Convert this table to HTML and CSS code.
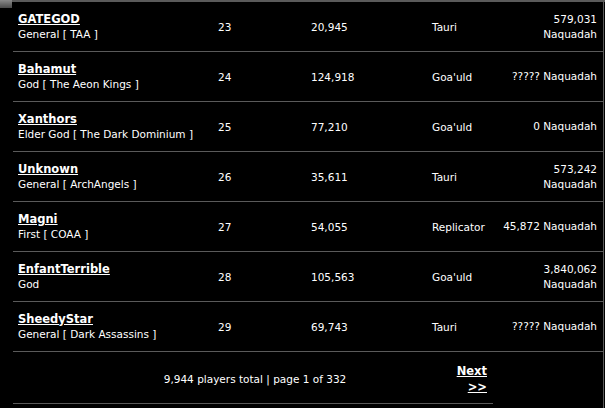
FILE: index.html
```html
<!DOCTYPE html>
<html>
<head>
<meta charset="utf-8">
<link rel="stylesheet" href="styles.css">
</head>
<body>
<div class="topbar"><span class="corner"></span></div>
<div class="board">
  <div class="row">
    <div class="c-name"><a href="#">GATEGOD</a><span>General [ TAA ]</span></div>
    <div class="c-rank">23</div>
    <div class="c-score">20,945</div>
    <div class="c-race">Tauri</div>
    <div class="c-naq">579,031<br>Naquadah</div>
  </div>
  <div class="row">
    <div class="c-name"><a href="#">Bahamut</a><span>God [ The Aeon Kings ]</span></div>
    <div class="c-rank">24</div>
    <div class="c-score">124,918</div>
    <div class="c-race">Goa'uld</div>
    <div class="c-naq">????? Naquadah</div>
  </div>
  <div class="row">
    <div class="c-name"><a href="#">Xanthors</a><span>Elder God [ The Dark Dominium ]</span></div>
    <div class="c-rank">25</div>
    <div class="c-score">77,210</div>
    <div class="c-race">Goa'uld</div>
    <div class="c-naq">0 Naquadah</div>
  </div>
  <div class="row">
    <div class="c-name"><a href="#">Unknown</a><span>General [ ArchAngels ]</span></div>
    <div class="c-rank">26</div>
    <div class="c-score">35,611</div>
    <div class="c-race">Tauri</div>
    <div class="c-naq">573,242<br>Naquadah</div>
  </div>
  <div class="row">
    <div class="c-name"><a href="#">Magni</a><span>First [ COAA ]</span></div>
    <div class="c-rank">27</div>
    <div class="c-score">54,055</div>
    <div class="c-race">Replicator</div>
    <div class="c-naq">45,872 Naquadah</div>
  </div>
  <div class="row">
    <div class="c-name"><a href="#">EnfantTerrible</a><span>God</span></div>
    <div class="c-rank">28</div>
    <div class="c-score">105,563</div>
    <div class="c-race">Goa'uld</div>
    <div class="c-naq">3,840,062<br>Naquadah</div>
  </div>
  <div class="row">
    <div class="c-name"><a href="#">SheedyStar</a><span>General [ Dark Assassins ]</span></div>
    <div class="c-rank">29</div>
    <div class="c-score">69,743</div>
    <div class="c-race">Tauri</div>
    <div class="c-naq">????? Naquadah</div>
  </div>
  <div class="footer">
    <div class="total">9,944 players total | page 1 of 332</div>
    <div class="next"><a href="#">Next<br>&gt;&gt;</a></div>
  </div>
</div>
</body>
</html>
```
FILE: styles.css
```css
html, body {
  margin: 0;
  padding: 0;
  background: #000;
  color: #fff;
  font-family: "DejaVu Sans", Verdana, sans-serif;
  font-size: 10.5px;
  width: 605px;
  height: 408px;
  overflow: hidden;
}
.topbar {
  height: 2px;
  background: #5a5a5a;
  position: relative;
}
.corner {
  position: absolute;
  left: 0;
  top: 0;
  width: 12px;
  height: 8px;
  background: linear-gradient(180deg, #8a8a8a, #4a4a4a);
}
.board {
  margin-left: 13px;
  width: 590px;
  border-right: 1px solid #5a5a5a;
  height: 406px;
}
.row {
  display: grid;
  grid-template-columns: 197px 98px 121px 72px 96px;
  padding-right: 6px;
  height: 49px;
  border-bottom: 1px solid #5a5a5a;
  align-items: center;
}
.c-name {
  padding-left: 5px;
  display: flex;
  flex-direction: column;
  line-height: 15px;
}
.c-name a {
  color: #fff;
  font-weight: bold;
  font-size: 11.5px;
  text-decoration: underline;
}
.c-rank { padding-left: 8px; }
.c-score { padding-left: 3px; }
.c-race { padding-left: 3px; white-space: nowrap; }
.c-naq {
  text-align: right;
  line-height: 15px;
  white-space: nowrap;
}
.footer {
  display: flex;
  width: 480px;
  height: 51px;
  border-bottom: 1px solid #5a5a5a;
  align-items: center;
}
.total {
  width: 400px;
  margin-left: 42px;
  text-align: center;
  padding-top: 2px;
}
.next {
  width: 32px;
  text-align: right;
  line-height: 16px;
  padding-top: 2px;
}
.next a {
  color: #fff;
  font-weight: bold;
  font-size: 11.5px;
  text-decoration: underline;
}
```
